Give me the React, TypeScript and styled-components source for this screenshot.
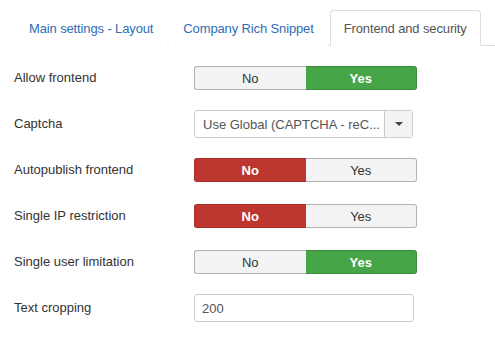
import React from "react"
import styled, { createGlobalStyle } from "styled-components"

const GlobalStyle = createGlobalStyle`
  body {
    margin: 0;
    background: #fff;
    font-family: "Liberation Sans", Arial, sans-serif;
    font-size: 13px;
    color: #333;
  }
`

const Page = styled.div`
  padding: 10px 0 0 14px;
`

const Tabs = styled.ul`
  display: flex;
  list-style: none;
  margin: 0;
  padding: 0 0 0 1px;
  border-bottom: 1px solid #ddd;
`

const Tab = styled.li<{ $active?: boolean }>`
  margin-right: 2px;
  margin-bottom: -1px;
  height: 34px;
  padding: 0 13px;
  display: flex;
  align-items: center;
  letter-spacing: -0.13px;
  border: 1px solid ${p => (p.$active ? "#ddd" : "transparent")};
  border-bottom-color: ${p => (p.$active ? "#fff" : "transparent")};
  border-radius: 4px 4px 0 0;
  background: #fff;
  color: ${p => (p.$active ? "#555" : "#2f6db5")};
  cursor: pointer;
`

const Form = styled.div`
  margin-top: 9px;
  display: grid;
  grid-template-columns: 180px 1fr;
  grid-auto-rows: 46px;
  align-items: center;
`

const Label = styled.label`
  color: #333;
  line-height: 14px;
`

const Toggle = styled.div`
  display: flex;
  width: 223px;
  height: 24px;
`

const ToggleButton = styled.button<{ $state?: "yes" | "no" }>`
  flex: 1;
  margin: 0;
  font-family: inherit;
  font-size: 13px;
  padding: 0;
  border: 1px solid
    ${p => (p.$state === "yes" ? "#3d8b3d" : p.$state === "no" ? "#a9302a" : "#b3b3b3")};
  background: ${p => (p.$state === "yes" ? "#46a546" : p.$state === "no" ? "#bd362f" : "#f3f3f3")};
  color: ${p => (p.$state ? "#fff" : "#333")};
  font-weight: ${p => (p.$state ? "bold" : "normal")};
  &:first-child {
    border-radius: 3px 0 0 3px;
    border-right: none;
  }
  &:last-child {
    border-radius: 0 3px 3px 0;
    border-left: none;
  }
`

const Select = styled.div`
  display: flex;
  width: 219px;
  height: 28px;
  box-sizing: border-box;
  border: 1px solid #ccc;
  border-radius: 3px;
  overflow: hidden;
`

const SelectValue = styled.div`
  flex: 1;
  display: flex;
  align-items: center;
  padding-left: 8px;
  color: #555;
  white-space: nowrap;
`

const SelectCaret = styled.div`
  width: 27px;
  border-left: 1px solid #ccc;
  background: #f3f3f3;
  display: flex;
  align-items: center;
  justify-content: center;
  &::after {
    content: "";
    border-left: 4px solid transparent;
    border-right: 4px solid transparent;
    border-top: 4px solid #444;
  }
`

const TextInput = styled.input`
  width: 220px;
  height: 28px;
  box-sizing: border-box;
  border: 1px solid #ccc;
  border-radius: 3px;
  padding: 0 7px;
  font-family: inherit;
  font-size: 13px;
  color: #555;
`

const switches = [
  { label: "Allow frontend", value: true },
  null,
  { label: "Autopublish frontend", value: false },
  { label: "Single IP restriction", value: false },
  { label: "Single user limitation", value: true },
]

const YesNo = ({ value }: { value: boolean }) => (
  <Toggle>
    <ToggleButton $state={value ? undefined : "no"}>No</ToggleButton>
    <ToggleButton $state={value ? "yes" : undefined}>Yes</ToggleButton>
  </Toggle>
)

export default function App() {
  return (
    <Page>
      <GlobalStyle />
      <Tabs>
        <Tab>Main settings - Layout</Tab>
        <Tab>Company Rich Snippet</Tab>
        <Tab $active>Frontend and security</Tab>
      </Tabs>
      <Form>
        {switches.map((row, i) =>
          row ? (
            <React.Fragment key={i}>
              <Label>{row.label}</Label>
              <YesNo value={row.value} />
            </React.Fragment>
          ) : (
            <React.Fragment key={i}>
              <Label>Captcha</Label>
              <Select>
                <SelectValue>Use Global (CAPTCHA - reC...</SelectValue>
                <SelectCaret />
              </Select>
            </React.Fragment>
          )
        )}
        <Label>Text cropping</Label>
        <TextInput defaultValue="200" />
      </Form>
    </Page>
  )
}
